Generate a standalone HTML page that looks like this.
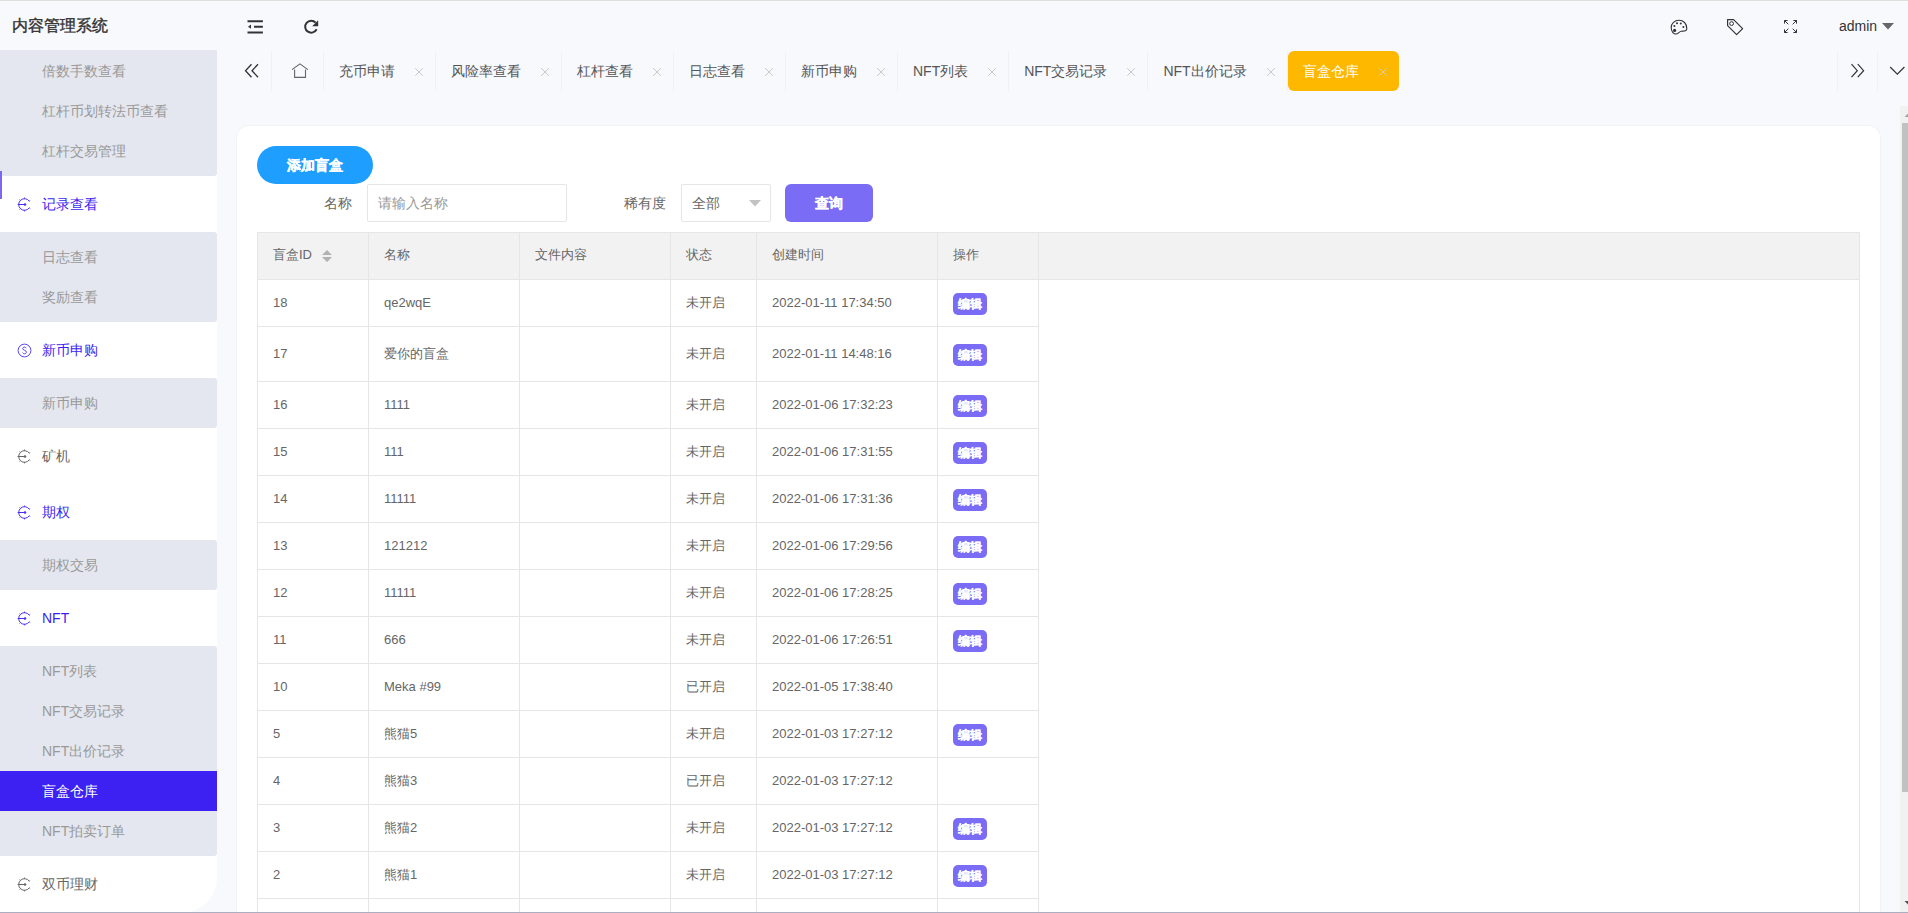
<!DOCTYPE html>
<html><head><meta charset="utf-8">
<style>
*{margin:0;padding:0;box-sizing:border-box}
html,body{width:1908px;height:913px;overflow:hidden}
body{position:relative;background:#f8f9fd;font-family:"Liberation Sans",sans-serif;font-size:14px;color:#333}
.abs{position:absolute}
#topline{left:0;top:0;width:1908px;height:1px;background:#dcdfdb}
#botline{left:0;top:912px;width:1908px;height:1px;background:#a9afc0}
#logo{left:12px;top:15px;font-size:16px;font-weight:400;-webkit-text-stroke:0.4px #333;line-height:22px;color:#333;letter-spacing:0}
/* sidebar */
#side{left:0;top:50px;width:217px;height:863px;background:#fff;border-bottom-right-radius:35px;overflow:hidden}
.sub{position:absolute;left:0;width:217px;background:#e4e7ef;border-radius:0 3px 3px 0}
.si{position:absolute;margin-top:1px;left:42px;font-size:14px;line-height:20px;color:#999;white-space:nowrap}
.sh{position:absolute;margin-top:1px;left:42px;font-size:14px;line-height:20px;color:#3b1ff2;white-space:nowrap}
.sh.g{color:#666}
.ic{position:absolute;left:17px;width:14px;height:14px}
#sel{left:0;top:721px;width:217px;height:40px;background:#3d20f2}
#bar{left:0;top:121px;width:2px;height:28px;background:#7b68ee}
/* tabs */
.tab{position:absolute;top:51px;height:40px;}
.sep{position:absolute;top:51px;width:1px;height:40px;background:#f1f1f1}
.tt{position:absolute;top:61px;font-size:14px;line-height:20px;color:#555;white-space:nowrap}
.tx{position:absolute;top:67.5px;width:8px;height:8px}
/* content */
#card{left:237px;top:126px;width:1643px;height:820px;background:#fff;border-radius:12px;box-shadow:0 0 0 1px #f2f3f7}
#addbtn{left:257px;top:146px;width:116px;height:38px;border-radius:19px;background:#1e9fff;color:#fff;font-weight:bold;font-size:14px;line-height:38px;text-align:center;-webkit-text-stroke:0.3px #fff}
.lbl{position:absolute;top:193px;font-size:14px;line-height:20px;color:#666}
#inp{left:367px;top:184px;width:200px;height:38px;border:1px solid #e6e6e6;border-radius:2px;color:#999;padding-left:10px;line-height:36px}
#selbox{left:681px;top:184px;width:90px;height:38px;border:1px solid #e6e6e6;border-radius:2px;color:#666;padding-left:10px;line-height:36px}
#qbtn{left:785px;top:184px;width:88px;height:38px;border-radius:6px;background:#7b6cf6;color:#fff;font-weight:bold;line-height:38px;text-align:center;-webkit-text-stroke:0.3px #fff}
/* table */
#thead{left:257px;top:232px;width:1603px;height:48px;background:#f2f2f2;border:1px solid #e6e6e6}
.vl{position:absolute;width:1px;background:#e6e6e6}
.hl{position:absolute;height:1px;background:#e6e6e6}
.th{position:absolute;top:245px;font-size:13px;line-height:20px;color:#666;white-space:nowrap}
.td{position:absolute;font-size:13px;line-height:20px;color:#666;white-space:nowrap}
.eb{position:absolute;left:953px;width:34px;height:22px;border-radius:5px;background:#7b6cf6;color:#fff;font-weight:bold;font-size:12px;line-height:22px;text-align:center;-webkit-text-stroke:0.2px #fff}
/* scrollbar */
#sbtrack{left:1900px;top:106px;width:17px;height:806px;background:#f1f1f1}
#sbthumb{left:1902px;top:123px;width:13px;height:669px;background:#c1c1c1}
</style></head><body>
<div id="topline" class="abs"></div>
<div id="logo" class="abs">内容管理系统</div>
<!-- header icons -->
<svg class="abs" style="left:246px;top:19px" width="18" height="16" viewBox="0 0 18 16">
 <path d="M1.5 2.2H16.9M8 7.7H16.9M1.5 13.4H16.9" stroke="#333" stroke-width="2" fill="none"/>
 <path d="M2 7.7L5 5.6V9.8Z" fill="#333"/>
</svg>
<svg class="abs" style="left:302px;top:18px" width="18" height="18" viewBox="0 0 18 18">
 <path d="M14.6 11.2A6 6 0 1 1 13.6 4.6" stroke="#333" stroke-width="2" fill="none"/>
 <path d="M16.2 2.2V8.2H10.2Z" fill="#333"/>
</svg>


<!-- right header -->
<svg class="abs" style="left:1670px;top:19px" width="18" height="16" viewBox="0 0 18 16">
 <path d="M9 1.2C4.6 1.2 1.2 4.4 1.2 8.6C1.2 12.6 3.6 15 6 15C8.2 15 9.2 12.4 11.4 12.2C13.6 12 16.8 12.8 16.8 9.4C16.8 4.6 13.4 1.2 9 1.2Z" stroke="#333" stroke-width="1.1" fill="none"/>
 <circle cx="4.6" cy="11.4" r="1.6" fill="#333"/>
 <circle cx="4.4" cy="7" r="1" fill="#333"/>
 <circle cx="7" cy="4.2" r="1" fill="#333"/>
 <circle cx="10.8" cy="4.6" r="1" fill="#333"/>
 <circle cx="13.4" cy="8" r="1" fill="#333"/>
</svg>
<svg class="abs" style="left:1726px;top:18px" width="18" height="18" viewBox="0 0 18 18">
 <path d="M1.6 1.6H7.6L16.6 10.6L10.6 16.6L1.6 7.6Z" stroke="#333" stroke-width="1.2" fill="none" stroke-linejoin="round"/>
 <circle cx="5.6" cy="5.6" r="1.9" stroke="#333" stroke-width="1" fill="none"/>
</svg>
<svg class="abs" style="left:1783px;top:19px" width="15" height="15" viewBox="0 0 15 15">
 <path d="M1.5 1.5L5.3 5.3M1.5 1.5V4.6M1.5 1.5H4.6 M13.5 1.5L9.7 5.3M13.5 1.5V4.6M13.5 1.5H10.4 M1.5 13.5L5.3 9.7M1.5 13.5V10.4M1.5 13.5H4.6 M13.5 13.5L9.7 9.7M13.5 13.5V10.4M13.5 13.5H10.4" stroke="#333" stroke-width="1" fill="none"/>
</svg>
<div class="abs" style="left:1839px;top:17px;font-size:14px;line-height:18px;color:#333">admin</div>
<svg class="abs" style="left:1882px;top:23px" width="12" height="7" viewBox="0 0 12 7"><path d="M0 0H12L6 6.5Z" fill="#666"/></svg>

<div id="side" class="abs">
 <div class="sub" style="top:-4px;height:130px"></div>
 <div class="si" style="top:10px">倍数手数查看</div>
 <div class="si" style="top:50px">杠杆币划转法币查看</div>
 <div class="si" style="top:90px">杠杆交易管理</div>
 <div id="bar" class="abs"></div>
<svg class="abs" style="left:16.5px;top:146.5px" width="15" height="15" viewBox="0 0 15 15">
 <path d="M12.25 4.17A5.8 5.8 0 1 0 12.25 10.83" stroke="#4a30f0" stroke-width="1" fill="none"/>
 <path d="M7.5 1.7V0.6M7.5 13.3V14.4M3.4 3.4L2.6 2.6M3.4 11.6L2.6 12.4M12.25 4.17L13.2 3.5M12.25 10.83L13.2 11.5M0.6 7.5H7.5" stroke="#4a30f0" stroke-width="1" fill="none"/>
 <circle cx="8" cy="7.5" r="1.25" fill="#4a30f0"/>
</svg>
<svg class="abs" style="left:16.5px;top:293.2px" width="15" height="15" viewBox="0 0 15 15">
 <circle cx="7.5" cy="7.5" r="6.4" stroke="#4a30f0" stroke-width="0.9" fill="none"/>
 <path d="M9.4 5.2C9 4.4 8.3 4.1 7.5 4.1C6.5 4.1 5.7 4.7 5.7 5.6C5.7 7.6 9.4 6.9 9.4 9.1C9.4 10.1 8.6 10.8 7.5 10.8C6.6 10.8 5.9 10.4 5.5 9.6" stroke="#4a30f0" stroke-width="0.9" fill="none"/>
</svg>
<svg class="abs" style="left:16.5px;top:399.2px" width="15" height="15" viewBox="0 0 15 15">
 <path d="M12.25 4.17A5.8 5.8 0 1 0 12.25 10.83" stroke="#666" stroke-width="1" fill="none"/>
 <path d="M7.5 1.7V0.6M7.5 13.3V14.4M3.4 3.4L2.6 2.6M3.4 11.6L2.6 12.4M12.25 4.17L13.2 3.5M12.25 10.83L13.2 11.5M0.6 7.5H7.5" stroke="#666" stroke-width="1" fill="none"/>
 <circle cx="8" cy="7.5" r="1.25" fill="#666"/>
</svg>
<svg class="abs" style="left:16.5px;top:455.0px" width="15" height="15" viewBox="0 0 15 15">
 <path d="M12.25 4.17A5.8 5.8 0 1 0 12.25 10.83" stroke="#4a30f0" stroke-width="1" fill="none"/>
 <path d="M7.5 1.7V0.6M7.5 13.3V14.4M3.4 3.4L2.6 2.6M3.4 11.6L2.6 12.4M12.25 4.17L13.2 3.5M12.25 10.83L13.2 11.5M0.6 7.5H7.5" stroke="#4a30f0" stroke-width="1" fill="none"/>
 <circle cx="8" cy="7.5" r="1.25" fill="#4a30f0"/>
</svg>
<svg class="abs" style="left:16.5px;top:561.0px" width="15" height="15" viewBox="0 0 15 15">
 <path d="M12.25 4.17A5.8 5.8 0 1 0 12.25 10.83" stroke="#4a30f0" stroke-width="1" fill="none"/>
 <path d="M7.5 1.7V0.6M7.5 13.3V14.4M3.4 3.4L2.6 2.6M3.4 11.6L2.6 12.4M12.25 4.17L13.2 3.5M12.25 10.83L13.2 11.5M0.6 7.5H7.5" stroke="#4a30f0" stroke-width="1" fill="none"/>
 <circle cx="8" cy="7.5" r="1.25" fill="#4a30f0"/>
</svg>
<svg class="abs" style="left:16.5px;top:826.5px" width="15" height="15" viewBox="0 0 15 15">
 <path d="M12.25 4.17A5.8 5.8 0 1 0 12.25 10.83" stroke="#666" stroke-width="1" fill="none"/>
 <path d="M7.5 1.7V0.6M7.5 13.3V14.4M3.4 3.4L2.6 2.6M3.4 11.6L2.6 12.4M12.25 4.17L13.2 3.5M12.25 10.83L13.2 11.5M0.6 7.5H7.5" stroke="#666" stroke-width="1" fill="none"/>
 <circle cx="8" cy="7.5" r="1.25" fill="#666"/>
</svg>
 <div class="sh" style="top:143px">记录查看</div>
 <div class="sub" style="top:182px;height:90px"></div>
 <div class="si" style="top:196px">日志查看</div>
 <div class="si" style="top:236px">奖励查看</div>
 <div class="sh" style="top:289px">新币申购</div>
 <div class="sub" style="top:328px;height:50px"></div>
 <div class="si" style="top:342px">新币申购</div>
 <div class="sh g" style="top:395px">矿机</div>
 <div class="sh" style="top:451px">期权</div>
 <div class="sub" style="top:490px;height:50px"></div>
 <div class="si" style="top:504px">期权交易</div>
 <div class="sh" style="top:557px">NFT</div>
 <div class="sub" style="top:596px;height:210px"></div>
 <div class="si" style="top:610px">NFT列表</div>
 <div class="si" style="top:650px">NFT交易记录</div>
 <div class="si" style="top:690px">NFT出价记录</div>
 <div id="sel" class="abs"></div>
 <div class="si" style="top:730px;color:#fff">盲盒仓库</div>
 <div class="si" style="top:770px">NFT拍卖订单</div>
 <div class="sh g" style="top:823px">双币理财</div>
</div>

<!-- tabs -->
<svg class="abs" style="left:244px;top:63px" width="16" height="16" viewBox="0 0 16 16">
 <path d="M7.5 1.2L1.5 7.7L7.5 14.2M14 1.2L8 7.7L14 14.2" stroke="#333" stroke-width="1.3" fill="none"/>
</svg>
<div class="sep" style="left:271px"></div>
<svg class="abs" style="left:291px;top:62px" width="18" height="17" viewBox="0 0 18 17">
 <path d="M1 7.6L8.9 1.9L16.9 7.6M3.6 7.6V15.4H14.5V7.6" stroke="#666" stroke-width="1.1" fill="none"/>
</svg>
<div class="sep" style="left:323px"></div>
<div id="tabs"><div class="tt" style="left:339.0px">充币申请</div>
<svg class="tx" style="left:415.0px" viewBox="0 0 8 8"><path d="M0.3 0.3L7.7 7.7M7.7 0.3L0.3 7.7" stroke="#c8c8c8" stroke-width="1"/></svg>
<div class="sep" style="left:435px"></div>
<div class="tt" style="left:451.0px">风险率查看</div>
<svg class="tx" style="left:541.0px" viewBox="0 0 8 8"><path d="M0.3 0.3L7.7 7.7M7.7 0.3L0.3 7.7" stroke="#c8c8c8" stroke-width="1"/></svg>
<div class="sep" style="left:561px"></div>
<div class="tt" style="left:577.0px">杠杆查看</div>
<svg class="tx" style="left:653.0px" viewBox="0 0 8 8"><path d="M0.3 0.3L7.7 7.7M7.7 0.3L0.3 7.7" stroke="#c8c8c8" stroke-width="1"/></svg>
<div class="sep" style="left:673px"></div>
<div class="tt" style="left:689.0px">日志查看</div>
<svg class="tx" style="left:765.0px" viewBox="0 0 8 8"><path d="M0.3 0.3L7.7 7.7M7.7 0.3L0.3 7.7" stroke="#c8c8c8" stroke-width="1"/></svg>
<div class="sep" style="left:785px"></div>
<div class="tt" style="left:801.0px">新币申购</div>
<svg class="tx" style="left:877.0px" viewBox="0 0 8 8"><path d="M0.3 0.3L7.7 7.7M7.7 0.3L0.3 7.7" stroke="#c8c8c8" stroke-width="1"/></svg>
<div class="sep" style="left:897px"></div>
<div class="tt" style="left:913.0px">NFT列表</div>
<svg class="tx" style="left:988.2px" viewBox="0 0 8 8"><path d="M0.3 0.3L7.7 7.7M7.7 0.3L0.3 7.7" stroke="#c8c8c8" stroke-width="1"/></svg>
<div class="sep" style="left:1008px"></div>
<div class="tt" style="left:1024.2px">NFT交易记录</div>
<svg class="tx" style="left:1127.4px" viewBox="0 0 8 8"><path d="M0.3 0.3L7.7 7.7M7.7 0.3L0.3 7.7" stroke="#c8c8c8" stroke-width="1"/></svg>
<div class="sep" style="left:1147px"></div>
<div class="tt" style="left:1163.4px">NFT出价记录</div>
<svg class="tx" style="left:1266.6px" viewBox="0 0 8 8"><path d="M0.3 0.3L7.7 7.7M7.7 0.3L0.3 7.7" stroke="#c8c8c8" stroke-width="1"/></svg>
<div class="sep" style="left:1287px"></div>
<div class="abs" style="left:1288.0px;top:51px;width:111px;height:40px;border-radius:6px;background:#ffb800"></div>
<div class="tt" style="left:1302.6px;color:#fff">盲盒仓库</div>
<svg class="tx" style="left:1378.6px" viewBox="0 0 8 8"><path d="M0.3 0.3L7.7 7.7M7.7 0.3L0.3 7.7" stroke="#d9cfa8" stroke-width="1"/></svg>
<div class="sep" style="left:1837px"></div>
<svg class="abs" style="left:1850px;top:63px" width="16" height="16" viewBox="0 0 16 16"><path d="M1.5 1.2L7.3 7.7L1.5 14.2M7.8 1.2L13.6 7.7L7.8 14.2" stroke="#333" stroke-width="1.2" fill="none"/></svg>
<div class="sep" style="left:1877px"></div>
<svg class="abs" style="left:1889px;top:65px" width="17" height="11" viewBox="0 0 17 11"><path d="M1.2 2L8.3 9.1L15.4 2" stroke="#333" stroke-width="1.2" fill="none"/></svg></div><!--/tabs-->

<div id="card" class="abs"></div>
<div id="addbtn" class="abs">添加盲盒</div>
<div class="lbl" style="left:324px">名称</div>
<div id="inp" class="abs">请输入名称</div>
<div class="lbl" style="left:624px">稀有度</div>
<div id="selbox" class="abs">全部</div>
<svg class="abs" style="left:749px;top:200px" width="12" height="7" viewBox="0 0 12 7"><path d="M0 0H12L6 6.5Z" fill="#c2c2c2"/></svg>
<div id="qbtn" class="abs">查询</div>

<div id="thead" class="abs"></div>
<div id="tbl"><div class="vl" style="left:368px;top:232px;height:681px"></div>
<div class="vl" style="left:519px;top:232px;height:681px"></div>
<div class="vl" style="left:670px;top:232px;height:681px"></div>
<div class="vl" style="left:756px;top:232px;height:681px"></div>
<div class="vl" style="left:937px;top:232px;height:681px"></div>
<div class="vl" style="left:1038px;top:232px;height:681px"></div>
<div class="vl" style="left:257px;top:232px;height:681px"></div>
<div class="vl" style="left:1859px;top:232px;height:681px"></div>
<div class="th" style="left:273px">盲盒ID</div>
<div class="th" style="left:384px">名称</div>
<div class="th" style="left:535px">文件内容</div>
<div class="th" style="left:686px">状态</div>
<div class="th" style="left:772px">创建时间</div>
<div class="th" style="left:953px">操作</div>
<svg class="abs" style="left:322px;top:250px" width="10" height="12" viewBox="0 0 10 12"><path d="M5 0L10 5H0Z M0 7H10L5 12Z" fill="#b2b2b2"/></svg>
<div class="td" style="left:273px;top:292.5px">18</div>
<div class="td" style="left:384px;top:292.5px">qe2wqE</div>
<div class="td" style="left:686px;top:292.5px">未开启</div>
<div class="td" style="left:772px;top:292.5px">2022-01-11 17:34:50</div>
<div class="eb" style="top:293.0px">编辑</div>
<div class="hl" style="left:257px;top:326px;width:782px"></div>
<div class="td" style="left:273px;top:343.5px">17</div>
<div class="td" style="left:384px;top:343.5px">爱你的盲盒</div>
<div class="td" style="left:686px;top:343.5px">未开启</div>
<div class="td" style="left:772px;top:343.5px">2022-01-11 14:48:16</div>
<div class="eb" style="top:344.0px">编辑</div>
<div class="hl" style="left:257px;top:381px;width:782px"></div>
<div class="td" style="left:273px;top:394.5px">16</div>
<div class="td" style="left:384px;top:394.5px">1111</div>
<div class="td" style="left:686px;top:394.5px">未开启</div>
<div class="td" style="left:772px;top:394.5px">2022-01-06 17:32:23</div>
<div class="eb" style="top:395.0px">编辑</div>
<div class="hl" style="left:257px;top:428px;width:782px"></div>
<div class="td" style="left:273px;top:441.5px">15</div>
<div class="td" style="left:384px;top:441.5px">111</div>
<div class="td" style="left:686px;top:441.5px">未开启</div>
<div class="td" style="left:772px;top:441.5px">2022-01-06 17:31:55</div>
<div class="eb" style="top:442.0px">编辑</div>
<div class="hl" style="left:257px;top:475px;width:782px"></div>
<div class="td" style="left:273px;top:488.5px">14</div>
<div class="td" style="left:384px;top:488.5px">11111</div>
<div class="td" style="left:686px;top:488.5px">未开启</div>
<div class="td" style="left:772px;top:488.5px">2022-01-06 17:31:36</div>
<div class="eb" style="top:489.0px">编辑</div>
<div class="hl" style="left:257px;top:522px;width:782px"></div>
<div class="td" style="left:273px;top:535.5px">13</div>
<div class="td" style="left:384px;top:535.5px">121212</div>
<div class="td" style="left:686px;top:535.5px">未开启</div>
<div class="td" style="left:772px;top:535.5px">2022-01-06 17:29:56</div>
<div class="eb" style="top:536.0px">编辑</div>
<div class="hl" style="left:257px;top:569px;width:782px"></div>
<div class="td" style="left:273px;top:582.5px">12</div>
<div class="td" style="left:384px;top:582.5px">11111</div>
<div class="td" style="left:686px;top:582.5px">未开启</div>
<div class="td" style="left:772px;top:582.5px">2022-01-06 17:28:25</div>
<div class="eb" style="top:583.0px">编辑</div>
<div class="hl" style="left:257px;top:616px;width:782px"></div>
<div class="td" style="left:273px;top:629.5px">11</div>
<div class="td" style="left:384px;top:629.5px">666</div>
<div class="td" style="left:686px;top:629.5px">未开启</div>
<div class="td" style="left:772px;top:629.5px">2022-01-06 17:26:51</div>
<div class="eb" style="top:630.0px">编辑</div>
<div class="hl" style="left:257px;top:663px;width:782px"></div>
<div class="td" style="left:273px;top:676.5px">10</div>
<div class="td" style="left:384px;top:676.5px">Meka #99</div>
<div class="td" style="left:686px;top:676.5px">已开启</div>
<div class="td" style="left:772px;top:676.5px">2022-01-05 17:38:40</div>
<div class="hl" style="left:257px;top:710px;width:782px"></div>
<div class="td" style="left:273px;top:723.5px">5</div>
<div class="td" style="left:384px;top:723.5px">熊猫5</div>
<div class="td" style="left:686px;top:723.5px">未开启</div>
<div class="td" style="left:772px;top:723.5px">2022-01-03 17:27:12</div>
<div class="eb" style="top:724.0px">编辑</div>
<div class="hl" style="left:257px;top:757px;width:782px"></div>
<div class="td" style="left:273px;top:770.5px">4</div>
<div class="td" style="left:384px;top:770.5px">熊猫3</div>
<div class="td" style="left:686px;top:770.5px">已开启</div>
<div class="td" style="left:772px;top:770.5px">2022-01-03 17:27:12</div>
<div class="hl" style="left:257px;top:804px;width:782px"></div>
<div class="td" style="left:273px;top:817.5px">3</div>
<div class="td" style="left:384px;top:817.5px">熊猫2</div>
<div class="td" style="left:686px;top:817.5px">未开启</div>
<div class="td" style="left:772px;top:817.5px">2022-01-03 17:27:12</div>
<div class="eb" style="top:818.0px">编辑</div>
<div class="hl" style="left:257px;top:851px;width:782px"></div>
<div class="td" style="left:273px;top:864.5px">2</div>
<div class="td" style="left:384px;top:864.5px">熊猫1</div>
<div class="td" style="left:686px;top:864.5px">未开启</div>
<div class="td" style="left:772px;top:864.5px">2022-01-03 17:27:12</div>
<div class="eb" style="top:865.0px">编辑</div>
<div class="hl" style="left:257px;top:898px;width:782px"></div></div><!--/tbl-->

<div id="sbtrack" class="abs"></div>
<div id="sbthumb" class="abs"></div>
<svg class="abs" style="left:1900px;top:106px" width="17" height="17" viewBox="0 0 17 17"><path d="M4.5 11H12.5L8.5 7Z" fill="#a3a3a3"/></svg>
<svg class="abs" style="left:1900px;top:895px" width="17" height="17" viewBox="0 0 17 17"><path d="M4.5 6H12.5L8.5 10Z" fill="#505050"/></svg>
<div id="botline" class="abs"></div>
</body></html>
